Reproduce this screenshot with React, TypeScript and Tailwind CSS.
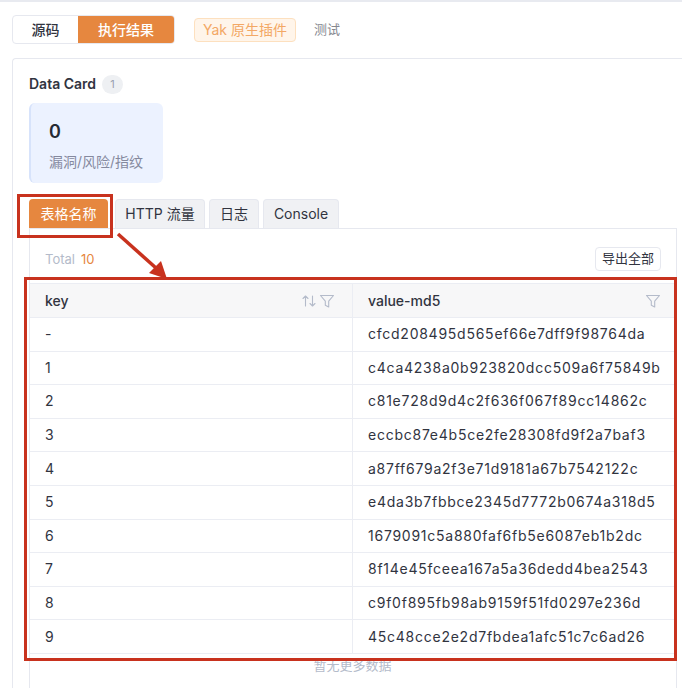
import React from "react";

const rows: [string, string][] = [
  ["-", "cfcd208495d565ef66e7dff9f98764da"],
  ["1", "c4ca4238a0b923820dcc509a6f75849b"],
  ["2", "c81e728d9d4c2f636f067f89cc14862c"],
  ["3", "eccbc87e4b5ce2fe28308fd9f2a7baf3"],
  ["4", "a87ff679a2f3e71d9181a67b7542122c"],
  ["5", "e4da3b7fbbce2345d7772b0674a318d5"],
  ["6", "1679091c5a880faf6fb5e6087eb1b2dc"],
  ["7", "8f14e45fceea167a5a36dedd4bea2543"],
  ["8", "c9f0f895fb98ab9159f51fd0297e236d"],
  ["9", "45c48cce2e2d7fbdea1afc51c7c6ad26"],
];

function FilterIcon() {
  return (
    <svg width="16" height="16" viewBox="0 0 16 16" fill="none" stroke="#b4bbca" strokeWidth="1.1" strokeLinejoin="round">
      <path d="M1.5 2.5h13l-4.8 5.6v5.9l-3.4-1.7V8.1z" />
    </svg>
  );
}

function SortIcon() {
  return (
    <svg width="16" height="16" viewBox="0 0 16 16" fill="none" stroke="#b4bbca" strokeWidth="1.1" strokeLinecap="round" strokeLinejoin="round">
      <path d="M4.5 13V3M2 5.5l2.5-2.5 2.5 2.5" />
      <path d="M11.5 3v10M9 10.5l2.5 2.5 2.5-2.5" />
    </svg>
  );
}

export default function App() {
  return (
    <div
      className="relative w-[682px] h-[688px] overflow-hidden bg-white border-t-2 border-[#e8eaf0] text-[#31343f]"
      style={{ fontFamily: 'Inter, "Noto Sans CJK SC", sans-serif' }}
    >
      {/* top bar */}
      <div className="flex items-center pl-3 pt-[13px]">
        <div className="flex h-[29px] rounded border border-[#e6e8ef] overflow-hidden text-sm font-medium">
          <div className="w-[65px] flex items-center justify-center">源码</div>
          <div className="w-[96px] flex items-center justify-center bg-[#e6873f] text-white">执行结果</div>
        </div>
        <div className="ml-[19px] h-[24px] px-[8px] flex items-center rounded border border-[#fde0bf] bg-[#fff5ea] text-[#f3a865] text-sm">
          Yak 原生插件
        </div>
        <div className="ml-[18px] text-[13px] text-[#85888f]">测试</div>
      </div>

      {/* result card */}
      <div className="ml-3 mt-[14px] h-[700px] border border-r-0 border-[#e6e8ef] rounded-tl pl-4 pt-[15px]">
        <div className="flex items-center h-5 gap-[6px]">
          <span className="text-sm font-semibold">Data Card</span>
          <span className="h-[19px] min-w-[21px] px-1 rounded-full bg-[#eef0f3] text-[11px] text-[#9aa0b0] flex items-center justify-center">1</span>
        </div>
        <div className="mt-[9px] w-[134px] h-[80px] rounded-md bg-[#ecf2ff] border-l-2 border-[#d7e3fb] pl-[18px] pt-[17px]">
          <div className="text-lg font-semibold leading-6 text-[#262a35]">0</div>
          <div className="mt-[8px] text-sm text-[#85899e]">漏洞/风险/指纹</div>
        </div>

        {/* tabs */}
        <div className="mt-[16px] flex items-end gap-1 h-[29px]">
          <div className="h-[29px] w-[79px] flex items-center justify-center rounded-t bg-[#e6873f] text-white text-sm">表格名称</div>
          <div className="ml-[3px] h-[29px] w-[90px] flex items-center justify-center rounded-t border border-b-0 border-[#e6e8ef] bg-[#f0f1f4] text-sm">HTTP 流量</div>
          <div className="h-[29px] w-[50px] flex items-center justify-center rounded-t border border-b-0 border-[#e6e8ef] bg-[#f0f1f4] text-sm">日志</div>
          <div className="h-[29px] w-[76px] flex items-center justify-center rounded-t border border-b-0 border-[#e6e8ef] bg-[#f0f1f4] text-sm">Console</div>
        </div>

        {/* tab panel */}
        <div className="w-[648px] h-[500px] border border-[#e6e8ef]">
          <div className="flex items-center justify-between px-[15px] pt-[18px] h-[44px]">
            <div className="text-[13px] flex gap-[6px]">
              <span className="text-[#b4bbca]">Total</span>
              <span className="text-[#e6873f]">10</span>
            </div>
            <div className="-mt-[2px] h-[24px] px-[6px] flex items-center rounded border border-[#e6e8ef] text-[13px]">导出全部</div>
          </div>
          <div className="mt-[10px] w-[645px] text-sm">
            <div className="flex h-[35px] bg-[#f7f7f8] border-y border-[#ebedf3]">
              <div className="w-[323px] flex items-center justify-between pl-[15px] pr-[17px] border-r border-[#ebedf3] font-medium">
                <span>key</span>
                <span className="flex items-center gap-[2px]">
                  <SortIcon />
                  <FilterIcon />
                </span>
              </div>
              <div className="flex-1 flex items-center justify-between pl-[15px] pr-[14px] font-medium">
                <span>value-md5</span>
                <FilterIcon />
              </div>
            </div>
            {rows.map(([k, v]) => (
              <div key={k} className="flex h-[33.6px] border-b border-[#ebedf3]">
                <div className="w-[323px] flex items-center pl-[15px] border-r border-[#ebedf3]">{k}</div>
                <div className="flex-1 flex items-center pl-[15px] tracking-[0.75px]">{v}</div>
              </div>
            ))}
            <div className="pt-[2px] text-center text-[13px] text-[#b4bbca]">暂无更多数据</div>
          </div>
        </div>
      </div>

      {/* annotations */}
      <div className="absolute left-[17px] top-[192px] w-[96px] h-[44px] border-[3px] border-[#c8321e] pointer-events-none" />
      <div className="absolute left-[24px] top-[275px] w-[653px] h-[384px] border-[3px] border-[#c8321e] pointer-events-none" />
      <svg className="absolute left-0 top-0 pointer-events-none" width="682" height="688">
        <line x1="118" y1="232" x2="156" y2="266" stroke="#c8321e" strokeWidth="3.5" />
        <polygon points="167,277 149,271 161,259" fill="#c8321e" />
      </svg>
    </div>
  );
}
